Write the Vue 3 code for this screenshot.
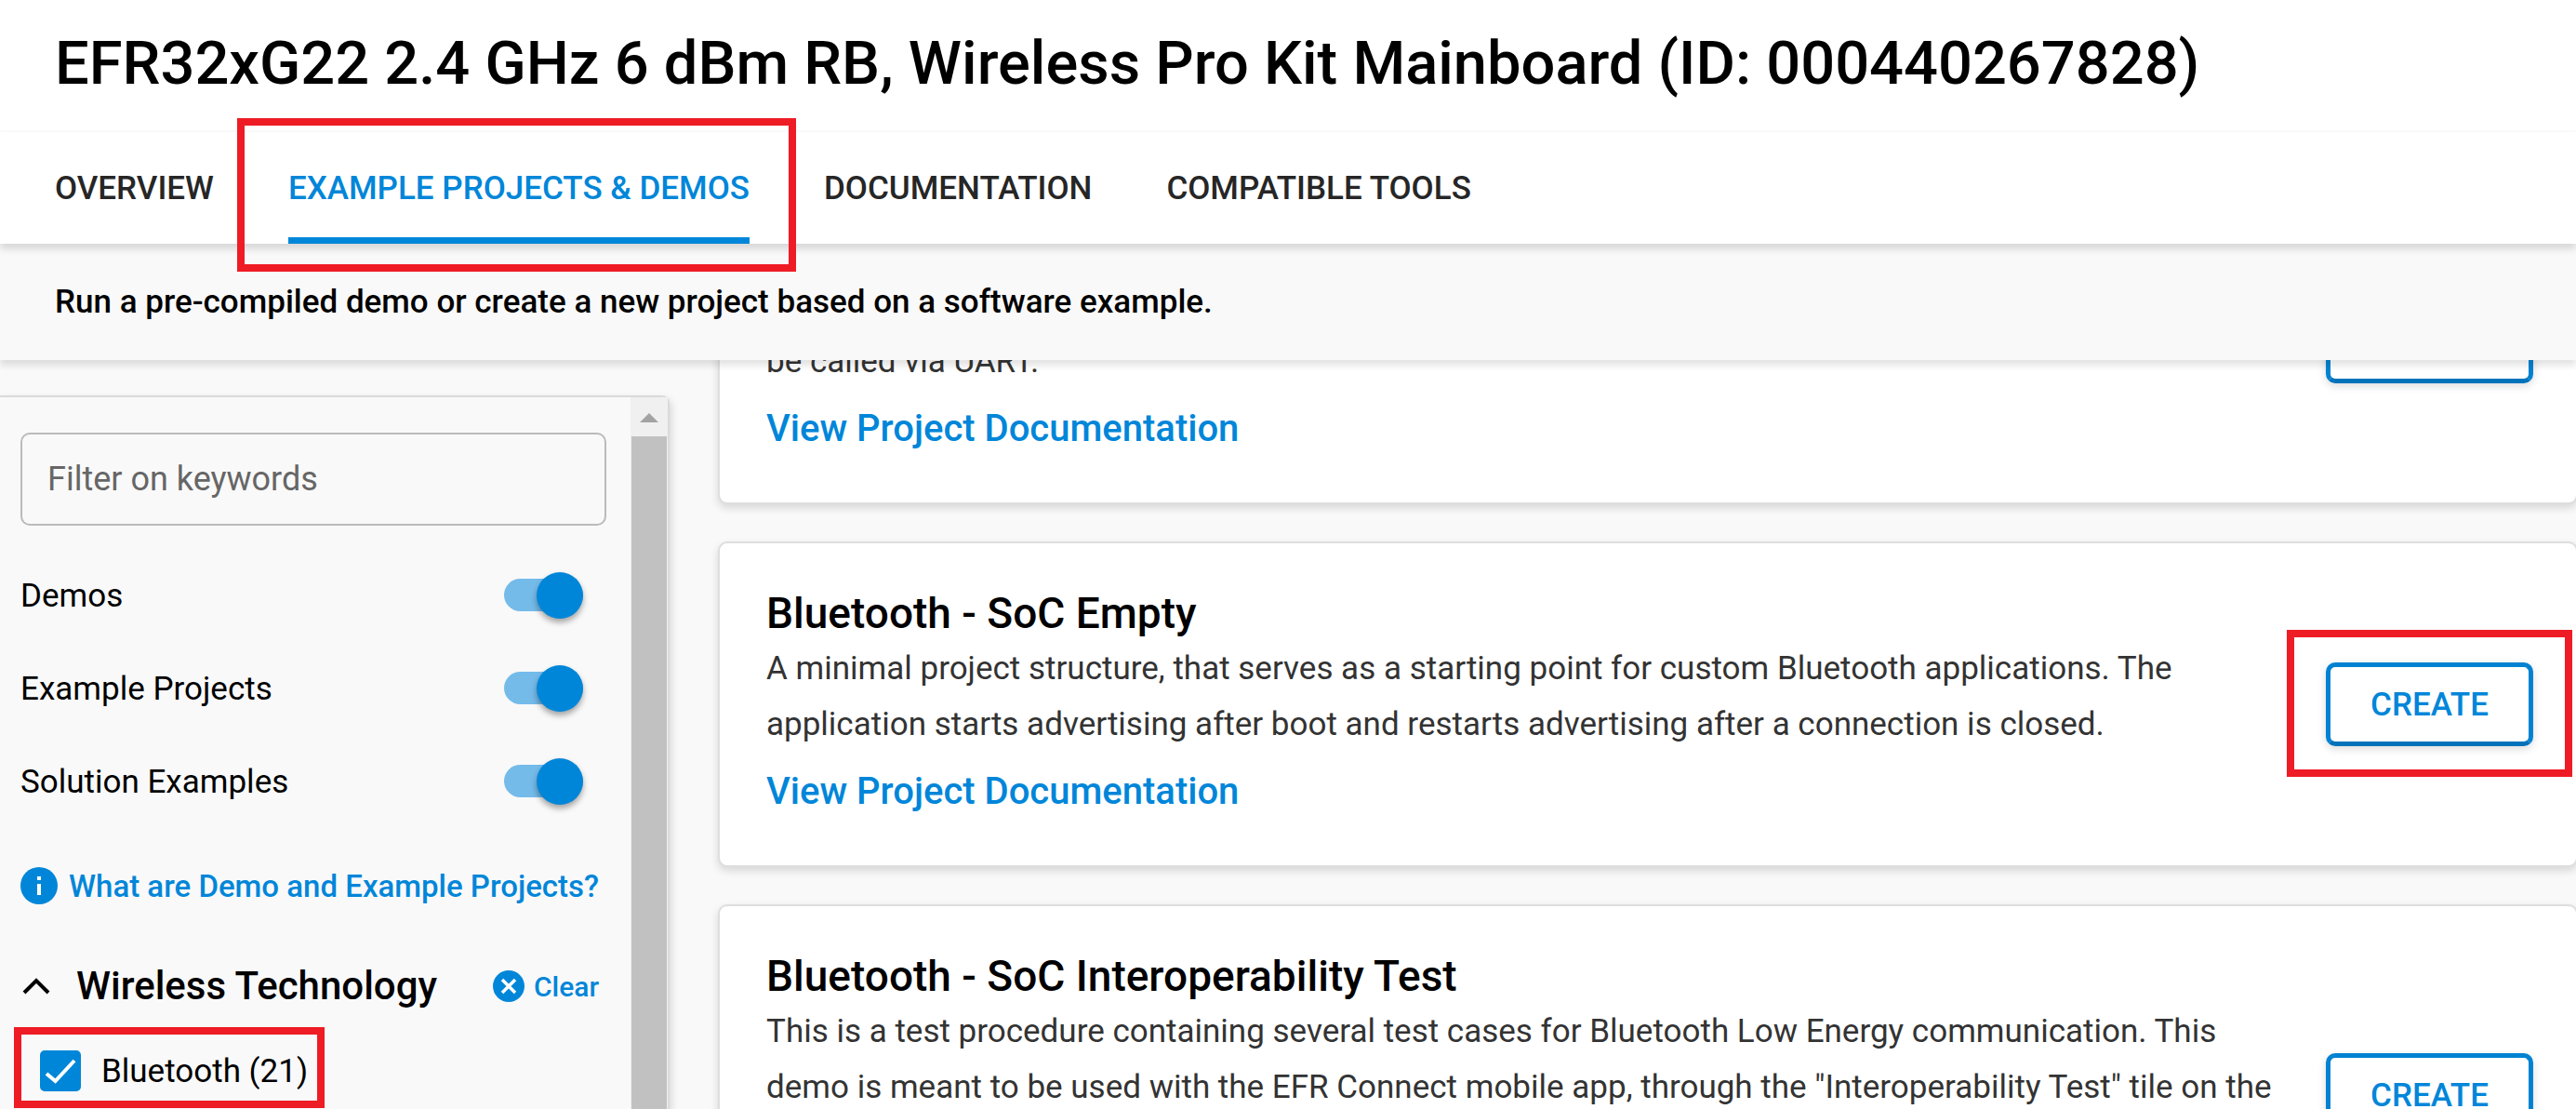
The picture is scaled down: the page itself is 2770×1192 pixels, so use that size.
<script setup>
import { onMounted, ref } from 'vue'

const tabs = ['Overview', 'Example Projects & Demos', 'Documentation', 'Compatible Tools']
const activeTab = ref(tabs[1])

const toggles = ref([
  { id: 'demos', label: 'Demos', on: true },
  { id: 'examples', label: 'Example Projects', on: true },
  { id: 'solutions', label: 'Solution Examples', on: true },
])

const keyword = ref('')
const bluetooth = ref(true)

const projects = [
  {
    id: 'ncp',
    text: 'be called via UART.',
  },
  {
    id: 'empty',
    title: 'Bluetooth - SoC Empty',
    text: 'A minimal project structure, that serves as a starting point for custom Bluetooth applications. The application starts advertising after boot and restarts advertising after a connection is closed.',
    marked: true,
  },
  {
    id: 'interop',
    title: 'Bluetooth - SoC Interoperability Test',
    text: 'This is a test procedure containing several test cases for Bluetooth Low Energy communication. This demo is meant to be used with the EFR Connect mobile app, through the "Interoperability Test" tile on the Develop view of the app.',
  },
]

const results = ref(null)
onMounted(() => {
  results.value.scrollTop = 195
})
</script>

<template>
  <div class="app">
    <header class="header">
      <h1>EFR32xG22 2.4 GHz 6 dBm RB, Wireless Pro Kit Mainboard (ID: 000440267828)</h1>
    </header>

    <nav class="tabs">
      <button
        v-for="tab in tabs"
        :key="tab"
        type="button"
        class="tab"
        :class="{ active: tab === activeTab }"
        @click="activeTab = tab"
      >
        {{ tab }}
        <span v-if="tab === tabs[1]" class="mark mark-tab"></span>
      </button>
    </nav>

    <p class="intro">Run a pre-compiled demo or create a new project based on a software example.</p>

    <main class="content">
      <aside class="sidebar">
        <div class="filters">
          <input v-model="keyword" class="keyword" type="text" placeholder="Filter on keywords" aria-label="Filter on keywords" />

          <label v-for="t in toggles" :key="t.id" class="toggle" :for="t.id">
            <span>{{ t.label }}</span>
            <input :id="t.id" v-model="t.on" class="switch" type="checkbox" />
          </label>

          <a class="help" href="#">
            <svg class="help-icon" viewBox="0 0 40 40" aria-hidden="true">
              <circle cx="20" cy="20" r="20" fill="#0086d9" />
              <path d="M18 10h4v4h-4zM18 18h4v12h-4z" fill="#fff" />
            </svg>
            <span>What are Demo and Example Projects?</span>
          </a>

          <div class="group">
            <svg class="chevron" viewBox="0 0 30 18" aria-hidden="true">
              <path d="M2 16L15 3L28 16" fill="none" stroke="#000" stroke-width="4" />
            </svg>
            <h2>Wireless Technology</h2>
            <button type="button" class="clear" @click="bluetooth = false">
              <svg class="clear-icon" viewBox="0 0 34 34" aria-hidden="true">
                <circle cx="17" cy="17" r="17" fill="#0086d9" />
                <path d="M10 10L24 24M24 10L10 24" stroke="#fff" stroke-width="3.5" />
              </svg>
              <span>Clear</span>
            </button>
          </div>

          <label class="option" for="bluetooth">
            <span class="box">
              <input id="bluetooth" v-model="bluetooth" type="checkbox" />
              <svg v-if="bluetooth" viewBox="0 0 44 44" aria-hidden="true">
                <path d="M7 25L16.500 33L37 11" fill="none" stroke="#fff" stroke-width="4" />
              </svg>
            </span>
            <span>Bluetooth (21)</span>
            <span class="mark mark-option"></span>
          </label>
        </div>
        <div class="scrollbar">
          <svg class="arrow" viewBox="0 0 20 10" aria-hidden="true"><path d="M0 10L10 0L20 10Z" fill="#a3a3a3" /></svg>
          <div class="thumb"></div>
        </div>
      </aside>

      <section ref="results" class="results">
        <article v-for="p in projects" :key="p.id" class="card">
          <div class="card-text">
            <h3 v-if="p.title">{{ p.title }}</h3>
            <p>{{ p.text }}</p>
            <a href="#">View Project Documentation</a>
          </div>
          <div class="action">
            <button type="button" class="create">CREATE</button>
            <span v-if="p.marked" class="mark mark-create"></span>
          </div>
        </article>
      </section>
    </main>
  </div>
</template>

<style>
body {
  margin: 0;
}
</style>

<style scoped>
.app {
  display: flex;
  flex-direction: column;
  height: 100vh;
  overflow: hidden;
  background: #f9f9f9;
  color: #000;
  font-family: Roboto, 'Liberation Sans', sans-serif;
  font-size: 35px;
}

.app * {
  box-sizing: border-box;
}

h1,
h2,
h3,
p {
  margin: 0;
  font-weight: 500;
}

button {
  padding: 0;
  border: 0;
  background: none;
  font-family: inherit;
  font-weight: 500;
  color: #0086d9;
  cursor: pointer;
}

a {
  color: #0086d9;
  font-weight: 500;
  text-decoration: none;
}

.mark {
  position: absolute;
  border: 8px solid #ee1c25;
  pointer-events: none;
}

.header {
  padding: 28px 59px 32px;
  border-bottom: 2px solid #fafafa;
  background: #fff;
}

h1 {
  font-size: 65px;
  line-height: 80px;
}

.tabs {
  position: relative;
  z-index: 3;
  display: flex;
  gap: 80px;
  height: 120px;
  flex: none;
  padding: 0 59px;
  background: #fff;
  box-shadow: 0 6px 7px rgba(0, 0, 0, 0.13);
}

.tab {
  position: relative;
  padding-top: 7px;
  border-bottom: 7px solid transparent;
  font-size: 35px;
  text-transform: uppercase;
  color: #262626;
}

.tab.active {
  border-color: #0086d9;
  color: #0086d9;
}

.mark-tab {
  inset: -15px -50px -37px -55px;
}

.intro {
  position: relative;
  z-index: 2;
  padding: 33px 59px 32px;
  background: #f9f9f9;
  font-size: 35px;
  line-height: 60px;
  box-shadow: 0 6px 7px rgba(0, 0, 0, 0.11);
}

.content {
  display: flex;
  flex: 1;
  min-height: 0;
}

.sidebar {
  display: flex;
  flex: none;
  width: 720px;
  margin-top: 38px;
  border: 2px solid #dadada;
  border-left: 0;
  border-bottom: 0;
  border-radius: 0 8px 0 0;
  box-shadow: 2px 4px 8px rgba(0, 0, 0, 0.14);
}

.filters {
  flex: 1;
  padding: 38px 26px 0 22px;
}

.keyword {
  display: block;
  width: 100%;
  height: 100px;
  margin-bottom: 25px;
  padding: 0 27px;
  border: 2px solid #bbb;
  border-radius: 10px;
  background: transparent;
  font-family: inherit;
  font-size: 36px;
  outline: none;
}

.keyword::placeholder {
  color: #666;
}

.toggle {
  display: flex;
  align-items: center;
  justify-content: space-between;
  height: 100px;
  padding-right: 25px;
}

.switch {
  position: relative;
  width: 85px;
  height: 50px;
  margin: 0;
  appearance: none;
}

.switch::before {
  content: '';
  display: block;
  height: 35px;
  margin: 7px 0 8px;
  border-radius: 18px;
  background: #bbb;
}

.switch::after {
  content: '';
  position: absolute;
  top: 0;
  left: 0;
  width: 50px;
  height: 50px;
  border-radius: 50%;
  background: #fff;
  box-shadow: 0 4px 6px rgba(0, 0, 0, 0.35);
}

.switch:checked::before {
  background: #74bbea;
}

.switch:checked::after {
  left: 35px;
  background: #0086d9;
}

.help {
  display: flex;
  align-items: center;
  gap: 12px;
  height: 60px;
  margin-top: 32px;
  font-size: 33px;
  white-space: nowrap;
}

.help-icon {
  width: 40px;
  height: 40px;
}

.group {
  display: flex;
  align-items: center;
  height: 60px;
  margin-top: 48px;
  padding: 0 8px 0 2px;
}

.chevron {
  width: 30px;
  height: 18px;
}

h2 {
  margin-left: 28px;
  font-size: 42px;
  line-height: 60px;
}

.clear {
  display: flex;
  align-items: center;
  gap: 10px;
  margin-left: auto;
  font-size: 30px;
}

.clear-icon {
  width: 34px;
  height: 34px;
}

.option {
  position: relative;
  display: flex;
  align-items: center;
  gap: 22px;
  width: fit-content;
  height: 60px;
  margin: 31px 0 0 21px;
}

.box {
  position: relative;
  width: 44px;
  height: 44px;
}

.box input {
  display: block;
  width: 44px;
  height: 44px;
  margin: 0;
  border: 4px solid #0086d9;
  border-radius: 5px;
  appearance: none;
}

.box input:checked {
  background: #0086d9;
}

.box svg {
  position: absolute;
  inset: 0;
  pointer-events: none;
}

.mark-option {
  inset: -17px -18px -10px -28px;
}

.scrollbar {
  display: flex;
  flex-direction: column;
  align-items: center;
  width: 40px;
  background: #f0f0f0;
}

.arrow {
  flex: none;
  width: 20px;
  height: 10px;
  margin: 17px 0 15px;
}

.thumb {
  flex: 1;
  width: 38px;
  background: #c1c1c1;
}

.results {
  display: flex;
  flex: 1;
  flex-direction: column;
  gap: 40px;
  min-width: 0;
  margin-right: -2px;
  padding-left: 52px;
  overflow-y: auto;
  scrollbar-width: none;
}

.card {
  display: flex;
  flex: none;
  align-items: center;
  justify-content: space-between;
  gap: 46px;
  min-height: 350px;
  padding: 45px 46px 45px 50px;
  border: 2px solid #dedede;
  border-radius: 10px;
  background: #fff;
  box-shadow: 0 4px 10px rgba(0, 0, 0, 0.14);
}

.card-text {
  align-self: flex-end;
}

h3 {
  font-size: 46px;
  line-height: 60px;
}

.card p {
  font-size: 35px;
  font-weight: 400;
  line-height: 60px;
  color: #333;
}

.card a {
  display: block;
  margin: 10px 0 2px;
  font-size: 40px;
  line-height: 64px;
}

.action {
  position: relative;
  flex: none;
}

.create {
  display: block;
  width: 223px;
  height: 90px;
  border: 5px solid #0082d2;
  border-bottom-color: #0073bb;
  border-radius: 10px;
  font-size: 35px;
  box-shadow: 0 3px 10px rgba(0, 0, 0, 0.14);
}

.mark-create {
  inset: -35px -42px -33px;
}
</style>
